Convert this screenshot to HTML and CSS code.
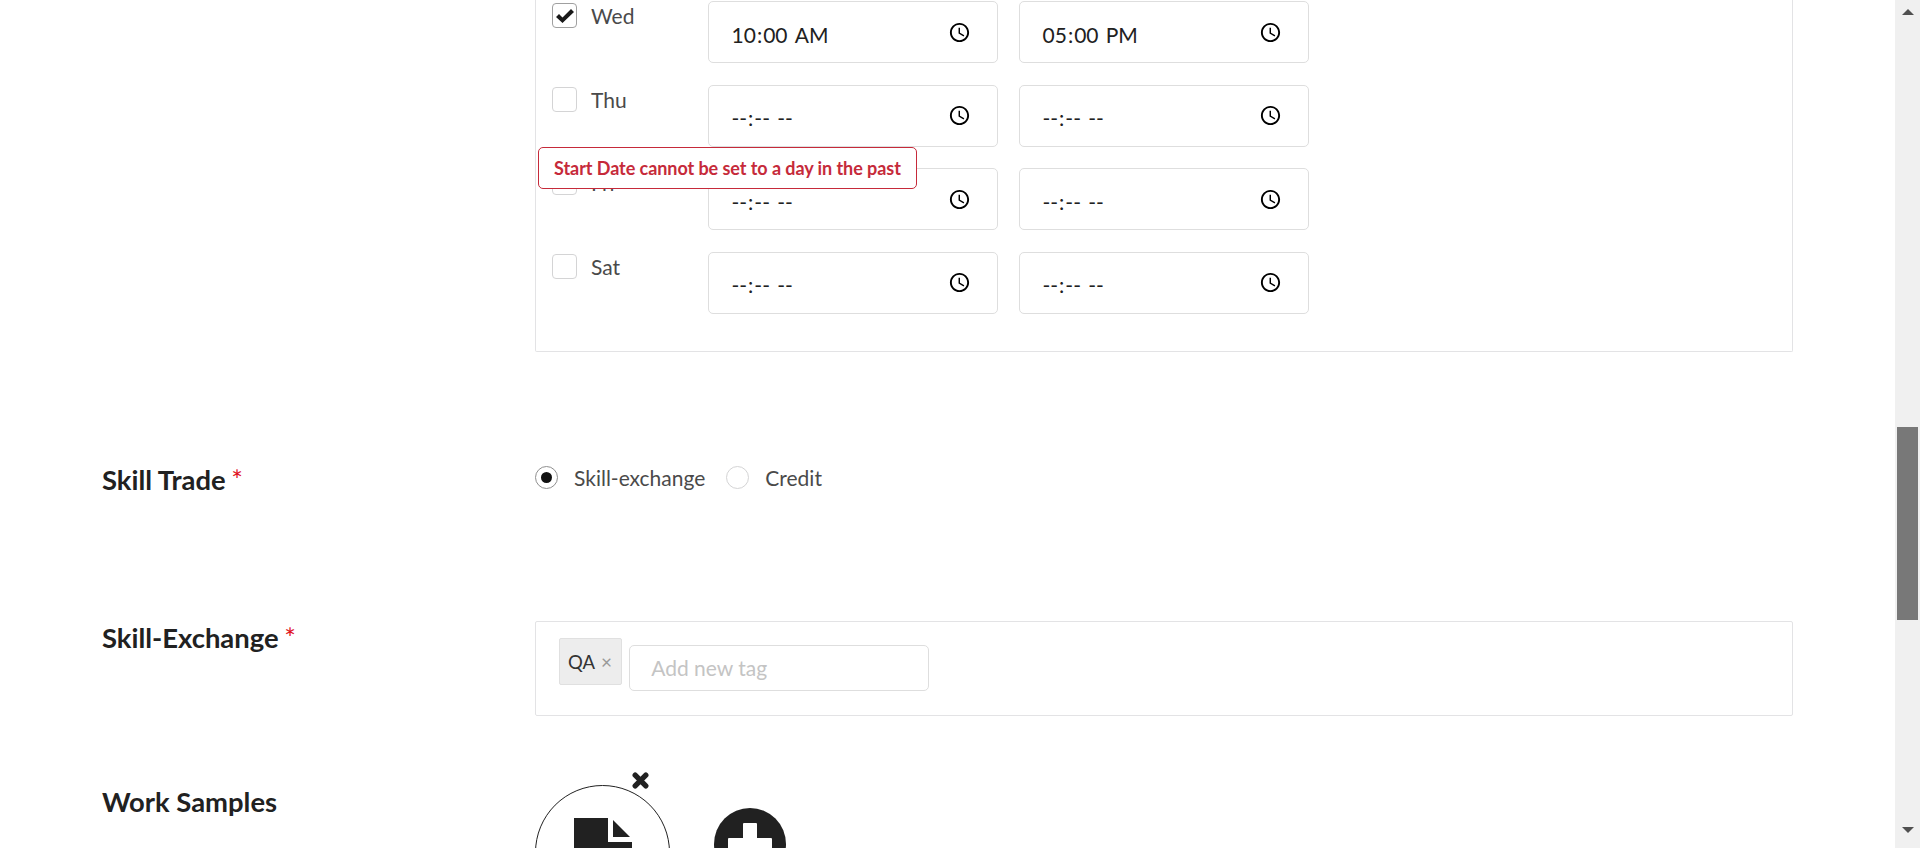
FILE: index.html
```html
<!DOCTYPE html>
<html lang="en">
<head>
    <meta charset="UTF-8">
    <meta name="viewport" content="width=device-width, initial-scale=1.0">
    <title>Share Skill</title>
    <link rel="stylesheet" href="styles.css">
</head>
<body>
    <main class="page">
        <section class="schedule">
            <div class="tip">Start Date cannot be set to a day in the past</div>
            <div class="day">
                <label class="day-name"><span class="box box-on">
                    <svg class="tick" viewBox="0 0 18 14"><path d="M0 8 3 5 6.500 8.500 15 0 18 3 6.500 14z"/></svg>
                </span>Wed</label>
                <input class="time" type="time" value="10:00">
                <input class="time" type="time" value="17:00">
            </div>
            <div class="day">
                <label class="day-name"><span class="box"></span>Thu</label>
                <input class="time" type="time">
                <input class="time" type="time">
            </div>
            <div class="day">
                <label class="day-name"><span class="box"></span>Fri</label>
                <input class="time" type="time">
                <input class="time" type="time">
            </div>
            <div class="day">
                <label class="day-name"><span class="box"></span>Sat</label>
                <input class="time" type="time">
                <input class="time" type="time">
            </div>
        </section>

        <section class="row row-trade">
            <h3 class="row-title">Skill Trade <span class="req">*</span></h3>
            <div class="radios">
                <label class="radio"><span class="dot dot-on"></span>Skill-exchange</label>
                <label class="radio"><span class="dot"></span>Credit</label>
            </div>
        </section>

        <section class="row row-exchange">
            <h3 class="row-title">Skill-Exchange <span class="req">*</span></h3>
            <div class="tags">
                <span class="tag">QA <span class="tag-x">&times;</span></span>
                <input class="tag-input" type="text" placeholder="Add new tag">
            </div>
        </section>

        <section class="row row-samples">
            <h3 class="row-title">Work Samples</h3>
            <div class="samples">
                <div class="sample">
                    <svg class="remove" viewBox="0 0 16 16"><path d="M3 3 13 13M13 3 3 13"/></svg>
                    <svg class="file" viewBox="0 0 58 76"><path d="M0 0H34V24H58V76H0zM39 2 56 19H39z"/></svg>
                </div>
                <div class="add">
                    <svg viewBox="0 0 72 72"><circle cx="36" cy="36" r="36"/><path class="plus" d="M30 16H42V31H57V43H42V58H30V43H15V31H30z"/></svg>
                </div>
            </div>
        </section>
    </main>

    <aside class="scrollbar">
        <span class="arrow-up"></span>
        <span class="thumb"></span>
        <span class="arrow-down"></span>
    </aside>
</body>
</html>
```

FILE: styles.css
```css
html, body {
    height: 100%;
    margin: 0;
}
body {
    display: flex;
    height: 848px;
    overflow: hidden;
    background-color: #fff;
    color: #212121;
    font-family: Lato, "Helvetica Neue", Arial, sans-serif;
    font-size: 20px;
}
.page {
    flex: 1;
    min-width: 0;
    padding-left: 103px;
    padding-right: 102px;
}

/* availability panel, top is scrolled off */
.schedule {
    position: relative;
    margin-left: 432px;
    padding: 1px 0 37px 16px;
    border: 1px solid #e3e3e5;
    border-top: none;
    border-radius: 0 0 2px 2px;
    display: flex;
    flex-direction: column;
    gap: 21.67px;
}
.day {
    display: flex;
    gap: 21px;
}
.day-name {
    display: flex;
    align-items: flex-start;
    gap: 14px;
    width: 135px;
    padding-top: 2px;
    color: #4a4a4a;
    font-size: 21px;
    line-height: 25px;
}
.box {
    flex: none;
    width: 25px;
    height: 25px;
    box-sizing: border-box;
    border: 1px solid #d4d4d5;
    border-radius: 4px;
    display: flex;
    align-items: center;
    justify-content: center;
}
.box-on {
    border-color: #a0a0a0;
}
.tick {
    width: 18px;
    height: 14px;
    fill: #191919;
}
.time {
    width: 290px;
    height: 62px;
    box-sizing: border-box;
    padding: 0 26px 0 21.5px;
    border: 1px solid #dedede;
    border-radius: 5px;
    background: #fff;
    color: #212121;
    font-family: inherit;
    font-size: 21px;
}
.time::-webkit-datetime-edit {
    padding-top: 4px;
}
.time::-webkit-calendar-picker-indicator {
    width: 23px;
    height: 23px;
    padding: 0;
}
.tip {
    position: absolute;
    left: 2px;
    top: 147px;
    height: 42px;
    box-sizing: border-box;
    padding: 0 15px;
    border: 1px solid #c62a3a;
    border-radius: 5px;
    background: #fff;
    color: #c62a3a;
    font-size: 18px;
    font-weight: 700;
    letter-spacing: -0.06px;
    line-height: 40px;
    white-space: nowrap;
}

.row {
    display: flex;
}
.row-title {
    flex: none;
    width: 433px;
    margin: 0 0 0 -1px;
    color: #212121;
    font-size: 27.4px;
    font-weight: 700;
    line-height: 33px;
}
.req {
    margin-left: -1px;
    color: #e0131f;
    font-weight: 400;
}
.row-trade {
    margin-top: 111px;
}
.row-exchange {
    margin-top: 125px;
}
.row-samples {
    margin-top: 69px;
}

.radios {
    display: flex;
    gap: 21px;
    padding-top: 2px;
}
.radio {
    display: flex;
    align-items: center;
    gap: 16px;
    height: 25px;
    color: #4a4a4a;
    font-size: 21px;
}
.dot {
    width: 23px;
    height: 23px;
    box-sizing: border-box;
    border: 1px solid #d4d4d5;
    border-radius: 50%;
    display: flex;
    align-items: center;
    justify-content: center;
}
.dot-on {
    border-color: #8f8f8f;
}
.dot-on::after {
    content: "";
    width: 11px;
    height: 11px;
    border-radius: 50%;
    background-color: #111;
}

.tags {
    flex: 1;
    height: 95px;
    box-sizing: border-box;
    padding: 16px 0 0 23px;
    border: 1px solid #e3e3e5;
    border-radius: 2px;
    display: flex;
    align-items: flex-start;
    gap: 7px;
}
.tag {
    height: 47px;
    box-sizing: border-box;
    padding: 0 9px 0 8px;
    background-color: #ededed;
    border: 1px solid #e0e0e0;
    border-radius: 2px;
    color: #333;
    font-size: 18.5px;
    line-height: 45px;
}
.tag-x {
    margin-left: 2px;
    color: #999;
    font-size: 19px;
}
.tag-input {
    width: 300px;
    height: 46px;
    box-sizing: border-box;
    margin-top: 7px;
    padding: 0 21px;
    border: 1px solid #dedede;
    border-radius: 5px;
    font-family: inherit;
    font-size: 21px;
}
.tag-input::placeholder {
    color: #c4c4c4;
}

.samples {
    display: flex;
    align-items: flex-start;
    gap: 44px;
}
.sample {
    position: relative;
    flex: none;
    width: 135px;
    height: 135px;
    box-sizing: border-box;
    border: 1.5px solid #212121;
    border-radius: 50%;
    display: flex;
    justify-content: center;
    padding-top: 32px;
}
.file {
    width: 58px;
    height: 76px;
    fill: #212121;
}
.remove {
    position: absolute;
    right: 20px;
    top: -14px;
    width: 17px;
    height: 17px;
    fill: none;
    stroke: #212121;
    stroke-width: 5;
    stroke-linecap: round;
}
.add {
    width: 72px;
    height: 72px;
    margin-top: 23px;
    fill: #212121;
}
.plus {
    fill: #fff;
    stroke: #fff;
    stroke-width: 2;
    stroke-linejoin: round;
}

/* page scrollbar */
.scrollbar {
    flex: none;
    width: 25px;
    height: 848px;
    background-color: #f0f0f0;
    display: flex;
    flex-direction: column;
    align-items: center;
}
.arrow-up, .arrow-down {
    width: 0;
    height: 0;
    border-left: 6px solid transparent;
    border-right: 6px solid transparent;
}
.arrow-up {
    margin-top: 9px;
    border-bottom: 6px solid #505050;
}
.arrow-down {
    margin-top: 207px;
    border-top: 6px solid #505050;
}
.thumb {
    width: 21px;
    height: 193px;
    margin-top: 412px;
    background-color: #787878;
}
```
